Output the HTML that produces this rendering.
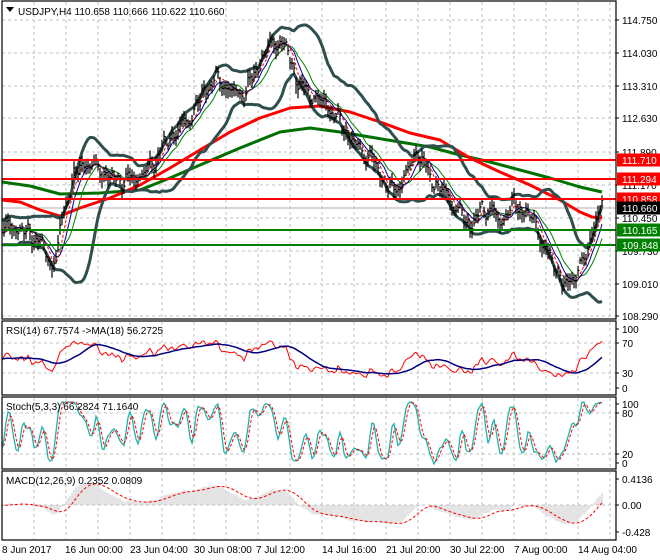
<!DOCTYPE html>
<html><head><meta charset="utf-8"><style>
body{margin:0;background:#fff;width:660px;height:560px;overflow:hidden;font-family:"Liberation Sans",sans-serif}
svg{display:block}
text{font-family:"Liberation Sans",sans-serif;font-size:10px}
</style></head><body>
<svg id="s" width="660" height="560" viewBox="0 0 660 560" xmlns="http://www.w3.org/2000/svg">
<defs>
<clipPath id="cm"><rect x="2" y="2" width="614" height="316"/></clipPath>
<clipPath id="cr"><rect x="2" y="322" width="614" height="73"/></clipPath>
<clipPath id="cs"><rect x="2" y="398" width="614" height="71"/></clipPath>
<clipPath id="cd"><rect x="2" y="472" width="614" height="67"/></clipPath>
</defs>
<rect width="660" height="560" fill="#fff"/>
<g id="grid" stroke="#c0c0c0" stroke-dasharray="3,3" stroke-width="1"></g>
<g id="main" clip-path="url(#cm)"></g>
<g id="rsi" clip-path="url(#cr)"></g>
<g id="sto" clip-path="url(#cs)"></g>
<g id="mac" clip-path="url(#cd)"></g>
<g fill="none" stroke="#000" stroke-width="1.2">
<rect x="2" y="1" width="614" height="318"/>
<rect x="2" y="321" width="614" height="74"/>
<rect x="2" y="397" width="614" height="72"/>
<rect x="2" y="471" width="614" height="69"/>
</g>
<path d="M6 7h8l-4 5z" fill="#000"/>
<text x="18" y="15" font-size="11">USDJPY,H4  110.658 110.666 110.622 110.660</text>
<text x="6" y="334">RSI(14) 67.7574  -&gt;MA(18) 56.2725</text>
<text x="6" y="410">Stoch(5,3,3) 66.2824 71.1640</text>
<text x="6" y="484">MACD(12,26,9) 0.2352 0.0809</text>
<g id="ax"></g>
<g font-size="10">
<text x="2" y="553">8 Jun 2017</text>
<text x="65" y="553">16 Jun 00:00</text>
<text x="130" y="553">23 Jun 04:00</text>
<text x="194" y="553">30 Jun 08:00</text>
<text x="256" y="553">7 Jul 12:00</text>
<text x="322" y="553">14 Jul 16:00</text>
<text x="386" y="553">21 Jul 20:00</text>
<text x="450" y="553">30 Jul 22:00</text>
<text x="514" y="553">7 Aug 00:00</text>
<text x="578" y="553">14 Aug 04:00</text>
</g>
</svg>
<script>
var NS="http://www.w3.org/2000/svg";
function el(p,t,a,txt){var e=document.createElementNS(NS,t);for(var k in a)e.setAttribute(k,a[k]);if(txt)e.textContent=txt;document.getElementById(p).appendChild(e);return e;}
for(var x=34;x<616;x+=32){el('grid','line',{x1:x,y1:2,x2:x,y2:318});el('grid','line',{x1:x,y1:322,x2:x,y2:395});el('grid','line',{x1:x,y1:398,x2:x,y2:469});el('grid','line',{x1:x,y1:472,x2:x,y2:539});}
var gy=[20,53,86,118,152,185,218,251,284,316];
gy.forEach(function(y){el('grid','line',{x1:2,y1:y,x2:616,y2:y});});
[343,373].forEach(function(y){el('grid','line',{x1:2,y1:y,x2:616,y2:y});});
[413,454].forEach(function(y){el('grid','line',{x1:2,y1:y,x2:616,y2:y});});
el('grid','line',{x1:2,y1:505,x2:616,y2:505});
var K=[[0,232],[10,226],[20,230],[35,236],[45,250],[52,268],[58,245],[65,205],[72,180],[85,162],[98,168],[110,178],[125,180],[140,176],[152,165],[162,148],[175,132],[190,118],[205,90],[215,78],[228,88],[240,96],[252,80],[265,50],[280,40],[288,52],[296,78],[306,92],[320,100],[332,110],[345,130],[358,148],[372,158],[383,180],[394,192],[405,176],[418,150],[430,178],[444,192],[458,210],[470,225],[482,210],[492,208],[500,226],[510,205],[524,210],[535,222],[545,250],[555,265],[566,288],[576,272],[586,258],[594,222],[603,205]];
function ip(x){for(var i=1;i<K.length;i++){if(x<=K[i][0]){var a=K[i-1],b=K[i];return a[1]+(b[1]-a[1])*(x-a[0])/(b[0]-a[0]);}}return K[K.length-1][1];}
var X=[],C=[],H=[],L=[];
for(var x=-60,i=0;x<=603;x+=2,i++){
 var n=3*Math.sin(x*0.83)+2*Math.sin(x*2.17+1)+4.5*Math.sin(x*0.36+2)+3*Math.sin(x*0.57+0.7);
 var c=ip(Math.max(0,x))+n; X.push(x);C.push(c);
 var r=4+Math.abs(6*Math.sin(x*1.7+0.5))+Math.abs(4*Math.sin(x*0.45));
 H.push(c-r*0.6);L.push(c+r*0.7);}
function sma(a,w){var o=[];for(var i=0;i<a.length;i++){var s=0,n=0;for(var j=Math.max(0,i-w+1);j<=i;j++){s+=a[j];n++;}o.push(s/n);}return o;}
function ema(a,w){var o=[],k=2/(w+1),v=a[0];for(var i=0;i<a.length;i++){v=a[i]*k+v*(1-k);o.push(v);}return o;}
function pl(g,xs,ys,st,sw,da){var d='';for(var i=0;i<xs.length;i++){if(xs[i]<0)continue;d+=(d?'L':'M')+xs[i].toFixed(1)+' '+ys[i].toFixed(1);}var a={d:d,fill:'none',stroke:st,'stroke-width':sw};if(da)a['stroke-dasharray']=da;el(g,'path',a);}
var m=sma(C,20),U=[],D=[];
for(var i=0;i<C.length;i++){var s=0,n=0;for(var j=Math.max(0,i-19);j<=i;j++){s+=(C[j]-m[i])*(C[j]-m[i]);n++;}var sd=Math.sqrt(s/n);U.push(m[i]-1.6*sd-5);D.push(m[i]+1.6*sd+5);}
function hp(pts,st,sw){var d='';pts.forEach(function(p,i){d+=(i?'L':'M')+p[0]+' '+p[1];});el('main','path',{d:d,fill:'none',stroke:st,'stroke-width':sw,'stroke-linejoin':'round'});}
el('main','line',{x1:2,y1:208,x2:616,y2:208,stroke:'#b0b0b0','stroke-width':1});
hp([[2,182],[30,186],[60,194],[100,193],[140,190],[170,178],[200,165],[240,148],[280,132],[310,128],[340,132],[370,137],[400,142],[430,147],[460,155],[490,162],[520,170],[550,178],[580,187],[602,192]],'#007000',3);
hp([[2,200],[20,202],[40,210],[60,216],[80,208],[110,198],[140,185],[170,168],[200,150],[230,132],[260,118],[290,108],[320,106],[350,112],[380,122],[410,133],[440,140],[470,158],[500,172],[530,185],[560,200],[580,212],[592,217],[602,218]],'#ff0000',3);
pl('main',X,U,'#2f4f4f',3);pl('main',X,D,'#2f4f4f',3);
pl('main',X,sma(C,13),'#008000',1);pl('main',X,sma(C,8),'#0000a0',1);pl('main',X,sma(C,5),'#ff0000',1,'3,2');
var cd='';for(var i=0;i<X.length;i++){if(X[i]<3)continue;cd+='M'+X[i]+' '+H[i].toFixed(1)+'V'+L[i].toFixed(1)+'M'+X[i]+' '+C[i].toFixed(1)+'h1.5';}
el('main','path',{d:cd,stroke:'#000','stroke-width':1.2,fill:'none'});
[[160,'#ff0000'],[179,'#ff0000'],[199,'#ff0000'],[230,'#008000'],[245,'#008000']].forEach(function(h){el('main','line',{x1:2,y1:h[0],x2:616,y2:h[0],stroke:h[1],'stroke-width':2});});
var g=[],l=[];for(var i=1;i<C.length;i++){var d=C[i-1]-C[i];g.push(Math.max(d,0));l.push(Math.max(-d,0));}
var ag=1,al=1,R=[50];for(var i=0;i<g.length;i++){ag=(ag*13+g[i])/14;al=(al*13+l[i])/14;R.push(100-100/(1+ag/(al+1e-6)));}
var Rb=sma(R,18);
pl('rsi',X,R.map(function(r){return 388-r*0.59;}),'#ff0000',1);
pl('rsi',X,Rb.map(function(r){return 388-r*0.59;}),'#000080',1.5);
var raw=[];for(var i=0;i<C.length;i++){var hh=1e9,ll=-1e9;for(var j=Math.max(0,i-4);j<=i;j++){hh=Math.min(hh,H[j]);ll=Math.max(ll,L[j]);}raw.push(100*(ll-C[i])/(ll-hh+1e-6));}
var Kk=sma(raw,3),Dd=sma(Kk,3);
function st(v){v=(v-50)*1.5+50;return 463-Math.max(-3,Math.min(103,v))*0.59;}
pl('sto',X,Kk.map(st),'#20b2aa',1.3);
pl('sto',X,Dd.map(st),'#ff0000',1,'3,2');
var e12=ema(C,12),e26=ema(C,26),M=[];for(var i=0;i<C.length;i++)M.push((e26[i]-e12[i])*1.1);
var S=sma(M,9),hd='';
for(var i=0;i<X.length;i++){if(X[i]<3)continue;hd+='M'+X[i]+' 505V'+(505-M[i]).toFixed(1);}
el('mac','path',{d:hd,stroke:'#bdbdbd','stroke-width':0.8,fill:'none'});
pl('mac',X,S.map(function(v){return 505-v;}),'#ff0000',1,'3,2');
var al2=[[20,'114.750'],[53,'114.030'],[86,'113.310'],[118,'112.630'],[152,'111.890'],[185,'111.170'],[218,'110.450'],[251,'109.730'],[284,'109.010'],[316,'108.290'],[329,'100'],[343,'70'],[373,'30'],[388,'0'],[404,'100'],[413,'80'],[454,'20'],[463,'0'],[479,'0.4136'],[505,'0.00'],[532,'-0.428']];
al2.forEach(function(a){el('ax','line',{x1:616,y1:a[0],x2:619,y2:a[0],stroke:'#000'});el('ax','text',{x:622,y:a[0]+4},a[1]);});
[[160,'#ff0000','111.710'],[179,'#ff0000','111.294'],[199,'#ff0000','110.858'],[208,'#000','110.660'],[230,'#008000','110.165'],[245,'#008000','109.848']].forEach(function(b){el('ax','rect',{x:617,y:b[0]-6.5,width:43,height:13,fill:b[1]});el('ax','text',{x:622,y:b[0]+4,fill:'#fff'},b[2]);});
</script>
</body></html>
